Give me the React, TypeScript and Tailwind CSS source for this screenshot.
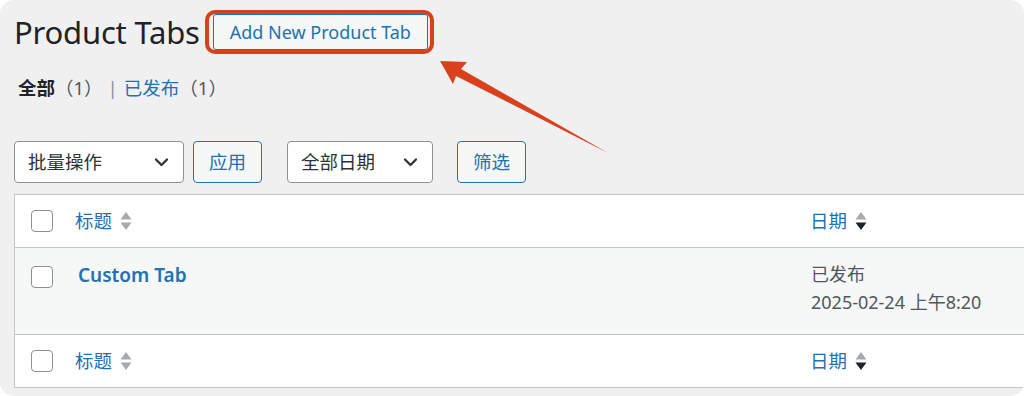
import React from 'react';

const FONT = { fontFamily: '"Noto Sans", "Open Sans", "Noto Sans CJK SC", sans-serif' };

function SortIcon({ active = false }: { active?: boolean }) {
  return (
    <svg width="12" height="20" viewBox="0 0 12 20" className="ml-[8px]">
      <path d="M6 1 L11.5 8.5 H0.5 Z" fill="#a7aaad" />
      <path d="M6 19 L11.5 11.5 H0.5 Z" fill={active ? '#1d2327' : '#a7aaad'} />
    </svg>
  );
}

function Chevron() {
  return (
    <svg width="15" height="10" viewBox="0 0 15 10" fill="none">
      <path d="M2 2.5l5.5 5.5 5.5-5.5" stroke="#2c3338" strokeWidth="2.3" strokeLinecap="round" strokeLinejoin="round" />
    </svg>
  );
}

function Checkbox() {
  return <span className="block w-[22px] h-[22px] rounded-[4px] border border-[#8c8f94] bg-white shrink-0" />;
}

function Select({ label, width }: { label: string; width: string }) {
  return (
    <div className={`${width} h-[42px] flex items-center justify-between pl-[13px] pr-[14px] bg-white border border-[#8c8f94] rounded-[4px] text-[18.5px] text-[#2c3338]`}>
      <span>{label}</span>
      <Chevron />
    </div>
  );
}

function Button({ label }: { label: string }) {
  return (
    <button className="w-[69px] h-[42px] flex items-center justify-center bg-[#f6f7f7] border border-[#2271b1] rounded-[4px] text-[18.5px] text-[#2271b1]">
      {label}
    </button>
  );
}

function HeaderRow({ border }: { border: 'b' | 't' }) {
  return (
    <div className={`h-[53px] flex items-center bg-white ${border === 'b' ? 'border-b' : 'border-t'} border-[#c3c4c7]`}>
      <div className="w-[60px] pl-[16px] flex items-center">
        <Checkbox />
      </div>
      <div className="flex-1 flex items-center text-[18.5px] text-[#2271b1]">
        标题
        <SortIcon />
      </div>
      <div className="w-[243px] flex items-center text-[18.5px] text-[#2271b1]">
        日期
        <SortIcon active />
      </div>
    </div>
  );
}

export default function App() {
  return (
    <div className="w-[1024px] h-[396px] bg-white" style={FONT}>
      <div className="relative w-full h-full rounded-[14px] overflow-hidden bg-[#f0f0f1] pl-[14px]">
        {/* Title */}
        <div className="flex items-center h-[40px] mt-[12px]">
          <h1 className="text-[31px] leading-[40px] text-[#1d2327] tracking-[-0.2px]">Product Tabs</h1>
          <button className="ml-[13px] h-[36px] px-[16px] border border-[#2271b1] rounded-[3px] bg-[#f6f7f7] text-[18px] text-[#2271b1]">
            Add New Product Tab
          </button>
        </div>

        {/* Status links */}
        <div className="mt-[22px] h-[28px] flex items-center pl-[4px] text-[18.5px]">
          <span className="font-bold text-[#1d2327]">全部</span>
          <span className="text-[#50575e]">（1）</span>
          <span className="text-[#8c8f94] ml-[5px] mr-[6px]">|</span>
          <span className="text-[#2271b1]">已发布</span>
          <span className="text-[#50575e]">（1）</span>
        </div>

        {/* Filters */}
        <div className="mt-[39px] flex items-center">
          <Select label="批量操作" width="w-[170px]" />
          <div className="ml-[9px]">
            <Button label="应用" />
          </div>
          <div className="ml-[25px]">
            <Select label="全部日期" width="w-[146px]" />
          </div>
          <div className="ml-[24px]">
            <Button label="筛选" />
          </div>
        </div>

        {/* Table */}
        <div className="mt-[11px] w-[1040px] border border-[#c3c4c7] bg-white">
          <HeaderRow border="b" />
          <div className="h-[86px] flex bg-[#f6f7f7]">
            <div className="w-[60px] pl-[16px] pt-[18px]">
              <Checkbox />
            </div>
            <div className="flex-1 pt-[14px] pl-[3px] text-[19px] font-semibold text-[#2271b1] leading-[26px]">Custom Tab</div>
            <div className="w-[243px] pl-[1px] pt-[12px] text-[18px] text-[#50575e] leading-[28px]">
              <div>已发布</div>
              <div>2025-02-24 上午8:20</div>
            </div>
          </div>
          <HeaderRow border="t" />
        </div>

        {/* Annotation */}
        <div className="absolute left-[205px] top-[10px] w-[229px] h-[44px] border-4 border-[#d8411e] rounded-[10px]" />
        <svg className="absolute left-0 top-0" width="1024" height="396" viewBox="0 0 1024 396">
          <polygon points="440,61 467,62 461,69 608,153 456,76 453,84" fill="#d8411e" />
        </svg>
      </div>
    </div>
  );
}
